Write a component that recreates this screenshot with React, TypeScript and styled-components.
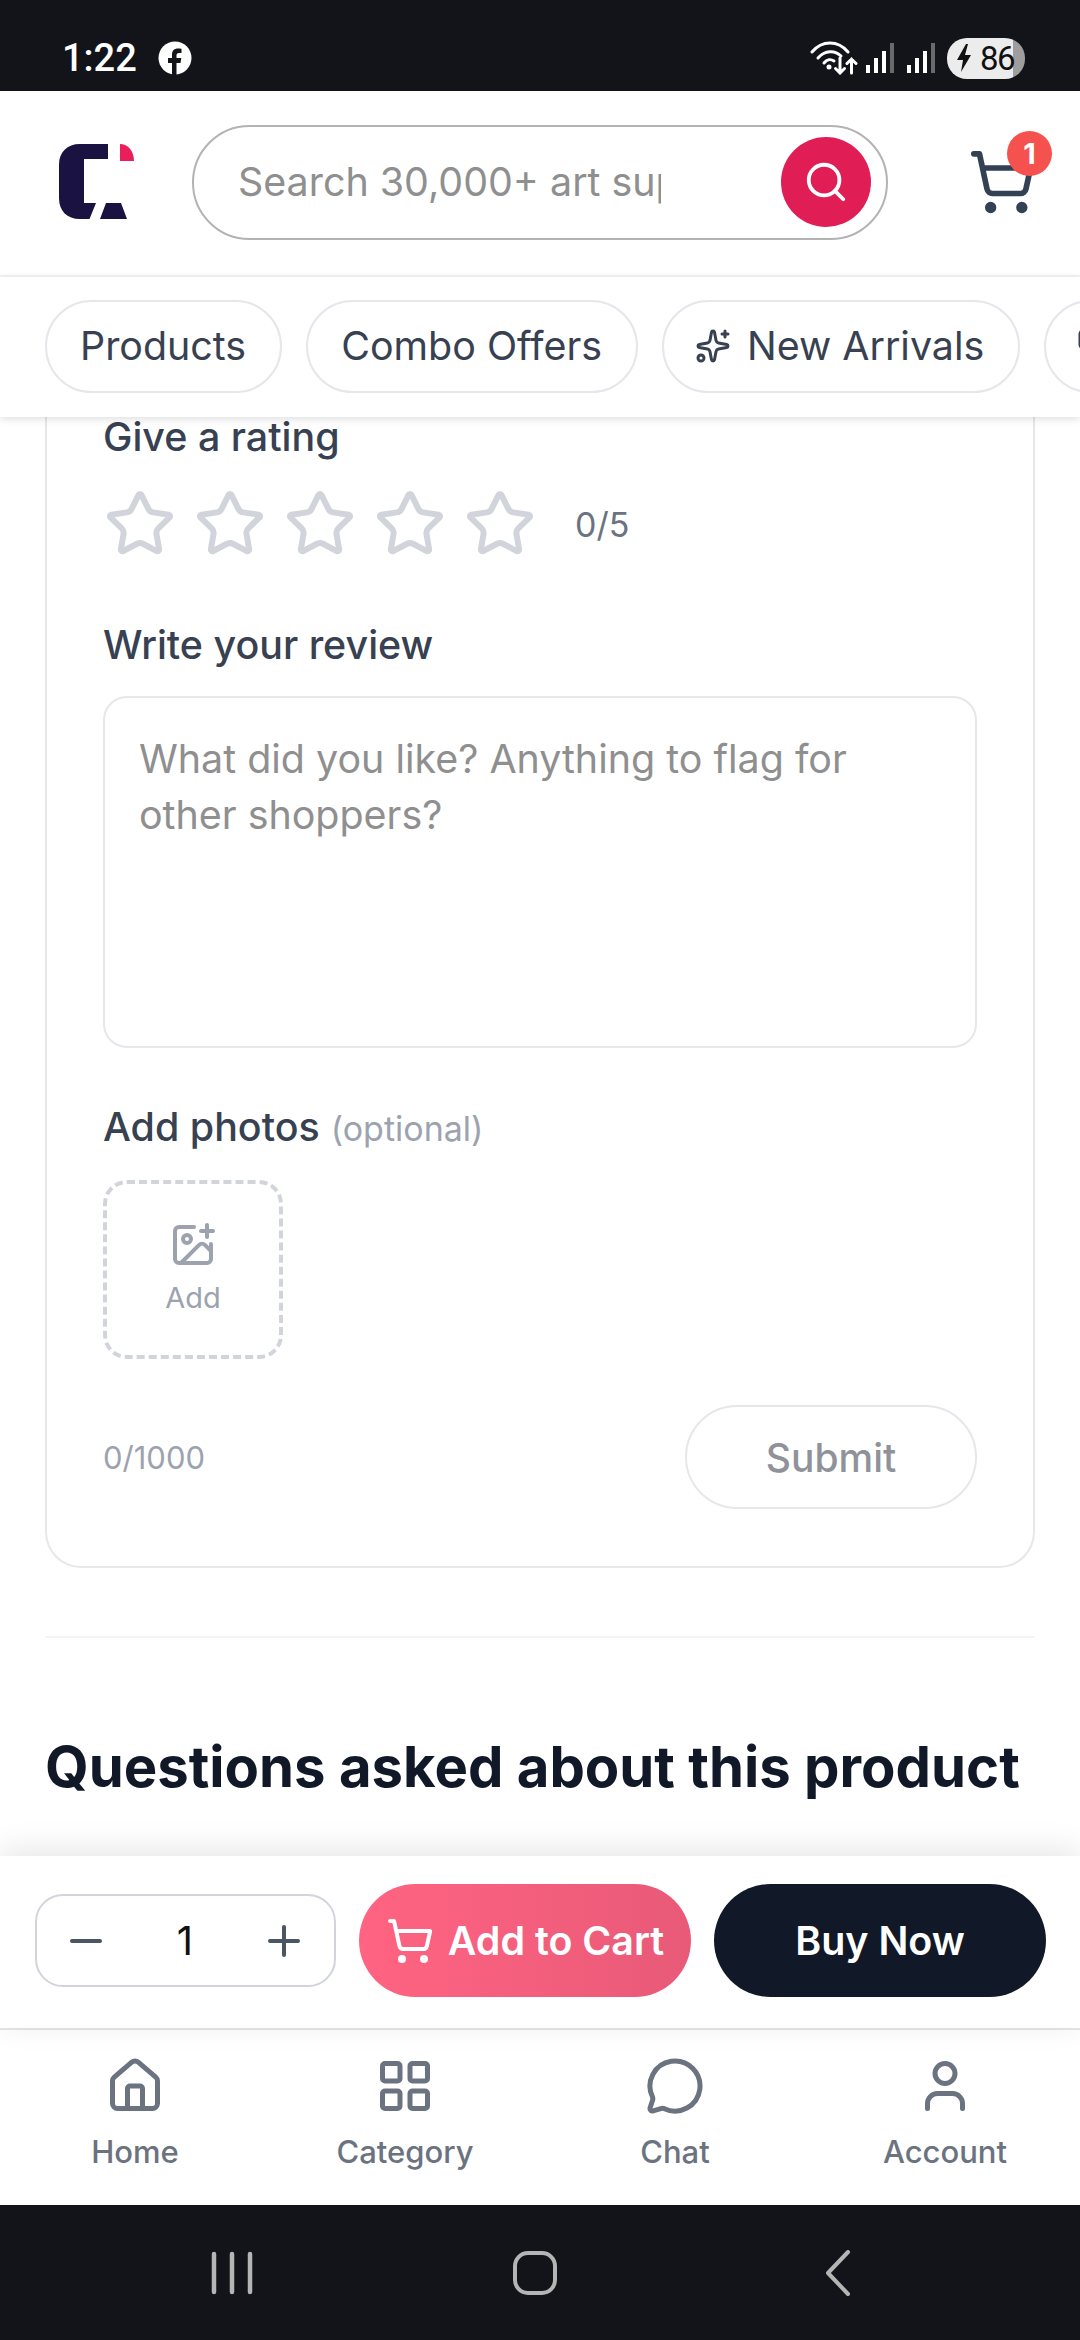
import * as React from 'react';
import styled, { createGlobalStyle } from 'styled-components';
import {
  Search,
  ShoppingCart,
  Sparkles,
  Tag,
  Star,
  ImagePlus,
  Minus,
  Plus,
  House,
  LayoutGrid,
  MessageCircle,
  User,
} from 'lucide-react';

const GlobalStyle = createGlobalStyle`
  html, body {
    margin: 0;
    padding: 0;
    background: #ffffff;
  }
  * {
    box-sizing: border-box;
  }
`;

const Page = styled.div`
  width: 1080px;
  height: 2340px;
  display: flex;
  flex-direction: column;
  overflow: hidden;
  background: #ffffff;
  font-family: Inter, 'Liberation Sans', sans-serif;
`;

const StatusBar = styled.div`
  height: 91px;
  flex: none;
  display: flex;
  align-items: center;
  padding: 25px 55px 0 62px;
  background: #121419;
  color: #ffffff;
  font-family: Roboto, 'Liberation Sans', sans-serif;
`;

const Clock = styled.span`
  font-size: 38px;
  font-weight: 500;
  margin-right: 21px;
`;

const StatusRight = styled.div`
  margin-left: auto;
  display: flex;
  align-items: center;
`;

const SignalGap = styled.span<{ $width: number }>`
  width: ${(props) => props.$width}px;
`;

const Battery = styled.div`
  width: 78px;
  height: 41px;
  margin-left: 12px;
  padding-left: 9px;
  display: flex;
  align-items: center;
  gap: 8px;
  border-radius: 20px;
  background: linear-gradient(90deg, #ececec 66px, #9e9e9e 66px);
  color: #111111;
  font-size: 33px;
  letter-spacing: -1.5px;
`;

const Header = styled.header`
  height: 186px;
  flex: none;
  display: flex;
  align-items: center;
  padding: 0 44px 2px 59px;
  border-bottom: 2px solid #f3f4f6;
`;

const SearchBox = styled.div`
  width: 696px;
  height: 115px;
  margin-left: 57px;
  padding: 0 15px 0 44px;
  display: flex;
  align-items: center;
  justify-content: space-between;
  border: 2.5px solid #b3b3b3;
  border-radius: 58px;
`;

const SearchInput = styled.input`
  width: 423px;
  padding: 0;
  border: none;
  outline: none;
  background: transparent;
  font-family: inherit;
  font-size: 39.4px;
  color: #111827;
  &::placeholder {
    color: #8f8f8f;
    opacity: 1;
  }
`;

const SearchButton = styled.button`
  width: 90px;
  height: 90px;
  padding: 0;
  display: flex;
  align-items: center;
  justify-content: center;
  border: none;
  border-radius: 50%;
  background: #e11d55;
  color: #ffffff;
`;

const CartLink = styled.div`
  position: relative;
  width: 68px;
  height: 68px;
  margin-left: auto;
  color: #334155;
`;

const CartBadge = styled.span`
  position: absolute;
  top: -17px;
  right: -16px;
  width: 45px;
  height: 45px;
  display: flex;
  align-items: center;
  justify-content: center;
  border-radius: 50%;
  background: #f5524f;
  color: #ffffff;
  font-size: 29px;
  font-weight: 700;
`;

const ChipBar = styled.nav`
  position: relative;
  z-index: 2;
  height: 140px;
  flex: none;
  padding: 23px 0 0 45px;
  display: flex;
  align-items: flex-start;
  gap: 24px;
  overflow: hidden;
  background: #ffffff;
  box-shadow: 0 2px 8px rgba(0, 0, 0, 0.13);
`;

const Chip = styled.div<{ $withIcon?: boolean }>`
  height: 93px;
  flex: none;
  padding: 0 34px 2px ${(props) => (props.$withIcon ? 31 : 33)}px;
  display: flex;
  align-items: center;
  gap: 16px;
  border: 2px solid #e5e7eb;
  border-radius: 47px;
  color: #374151;
  font-size: 39.4px;
`;

const Main = styled.main`
  flex: 1;
  min-height: 0;
  padding: 0 45px;
`;

const ReviewCard = styled.section`
  padding: 0 56px 57px;
  border: 2px solid #e5e7eb;
  border-top: none;
  border-radius: 0 0 36px 36px;
`;

const FieldLabel = styled.div<{ $top: number }>`
  margin-top: ${(props) => props.$top}px;
  font-size: 39.4px;
  line-height: 40px;
  font-weight: 500;
  color: #374151;
`;

const Optional = styled.span`
  margin-left: 11px;
  font-size: 34px;
  font-weight: 400;
  color: #9ca3af;
`;

const StarRow = styled.div`
  margin: 31px 0 0 1px;
  display: flex;
  align-items: center;
  gap: 18px;
  color: #d1d5db;
`;

const RatingValue = styled.span`
  margin-left: 21px;
  font-size: 34px;
  color: #6b7280;
`;

const ReviewInput = styled.textarea`
  display: block;
  width: 100%;
  height: 352px;
  margin-top: 31px;
  padding: 33px 34px;
  border: 2px solid #e5e7eb;
  border-radius: 24px;
  outline: none;
  resize: none;
  font-family: inherit;
  font-size: 39.4px;
  line-height: 56px;
  &::placeholder {
    color: #8f8f8f;
    opacity: 1;
  }
`;

const PhotoButton = styled.div`
  width: 180px;
  height: 179px;
  margin-top: 31px;
  padding-bottom: 2px;
  display: flex;
  flex-direction: column;
  align-items: center;
  justify-content: center;
  gap: 11px;
  border: 4.5px dashed #d1d5db;
  border-radius: 24px;
  color: #9ca3af;
  font-size: 29px;
  line-height: 36px;
`;

const CardFooter = styled.div`
  margin-top: 46px;
  display: flex;
  align-items: center;
  justify-content: space-between;
`;

const Counter = styled.span`
  font-size: 31px;
  color: #9ca3af;
`;

const SubmitButton = styled.button`
  width: 292px;
  height: 104px;
  border: 2px solid #e5e7eb;
  border-radius: 52px;
  background: #ffffff;
  font-family: inherit;
  font-size: 39px;
  font-weight: 500;
  color: #8f9299;
`;

const Divider = styled.hr`
  height: 2px;
  margin: 68px 0 0;
  border: none;
  background: #f3f4f6;
`;

const SectionTitle = styled.h2`
  margin: 99px 0 0;
  font-size: 56.25px;
  line-height: 60px;
  font-weight: 700;
  color: #111827;
  white-space: nowrap;
`;

const ActionBar = styled.div`
  position: relative;
  z-index: 2;
  height: 172px;
  flex: none;
  padding: 0 34px 3px 35px;
  display: flex;
  align-items: center;
  gap: 23px;
  background: #ffffff;
  box-shadow: 0 -6px 30px rgba(0, 0, 0, 0.1);
`;

const Stepper = styled.div`
  width: 301px;
  height: 93px;
  flex: none;
  padding: 0 26px 0 25px;
  display: flex;
  align-items: center;
  justify-content: space-between;
  border: 2px solid #d1d5db;
  border-radius: 28px;
  color: #4b5563;
  font-size: 40px;
`;

const StepValue = styled.span`
  color: #111111;
`;

const ActionButton = styled.button<{ $primary?: boolean }>`
  flex: 1;
  height: 113px;
  padding: 0;
  display: flex;
  align-items: center;
  justify-content: center;
  gap: 14px;
  border: none;
  border-radius: 57px;
  background: ${(props) => (props.$primary ? 'linear-gradient(90deg, #ff6482, #e85a78)' : '#111827')};
  color: #ffffff;
  font-family: inherit;
  font-size: 39.4px;
  font-weight: 600;
`;

const TabBar = styled.nav`
  height: 177px;
  flex: none;
  display: grid;
  grid-template-columns: repeat(4, 1fr);
  border-top: 2px solid #e5e7eb;
  background: #ffffff;
`;

const Tab = styled.div`
  padding-top: 26px;
  display: flex;
  flex-direction: column;
  align-items: center;
  gap: 16px;
  color: #6b7280;
  font-size: 31px;
  line-height: 40px;
  font-weight: 500;
`;

const SystemNav = styled.div`
  height: 135px;
  flex: none;
  padding-left: 80px;
  display: flex;
  align-items: center;
  background: #121419;
  color: #b5b5b5;
`;

const SystemKey = styled.div`
  width: 303px;
  display: flex;
  justify-content: center;
`;

const FacebookIcon = () => (
  <svg width="34" height="34" viewBox="0 0 34 34">
    <circle cx="17" cy="17" r="16.5" fill="#ffffff" />
    <path
      d="M14 34V22H10v-5h4v-3.5C14 9.500 16.400 7.500 20 7.500c1.700 0 3 .2 3.500.3V12h-2.400c-2 0-2.600 1-2.600 2.500V17h4.800l-.8 5h-4v12z"
      fill="#121419"
    />
  </svg>
);

const WifiIcon = () => (
  <svg width="48" height="34" viewBox="0 0 48 34" fill="none" stroke="#ffffff" strokeWidth="3" strokeLinecap="round">
    <path d="M2 11C12 -1 28 -1 38 11" />
    <path d="M8 17C15 9 25 9 31 15" />
    <path d="M14 22C17 18 21 18 24 20" />
    <circle cx="19" cy="26" r="2.500" fill="#ffffff" stroke="none" />
    <path d="M30 17v15M25.500 27.500l4.500 4.500 4.500-4.500" />
    <path d="M41.500 32V18M37 22.500l4.500-4.500 4.500 4.500" />
  </svg>
);

const SignalIcon = () => (
  <svg width="28" height="30" viewBox="0 0 28 30">
    <rect x="0" y="22" width="4" height="8" fill="#ffffff" />
    <rect x="8" y="15" width="4" height="15" fill="#ffffff" />
    <rect x="16" y="8" width="4" height="22" fill="#ffffff" />
    <rect x="24" y="0" width="4" height="30" fill="#6a6a6a" />
  </svg>
);

const BoltIcon = () => (
  <svg width="16" height="28" viewBox="0 0 16 28">
    <path d="M10 0L1 16h6L5 28l10-17H9l3-11z" fill="#111111" />
  </svg>
);

const Logo = () => (
  <svg width="76" height="76" viewBox="0 0 76 76">
    <path d="M49 0v15H25v44h12l-6.500 16H21C8 75 0 67 0 54V21C0 8 8 0 21 0z" fill="#1a1240" />
    <path d="M47 59h15l6 16H41z" fill="#1a1240" />
    <path d="M61 0c8 0 14 7 14 17H61z" fill="#e91e5a" />
  </svg>
);

const RecentsKey = () => (
  <svg width="42" height="44" viewBox="0 0 42 44" fill="none" stroke="currentColor" strokeWidth="4.500" strokeLinecap="round">
    <path d="M3 3v38M21 3v38M39 3v38" />
  </svg>
);

const HomeKey = () => (
  <svg width="44" height="44" viewBox="0 0 44 44" fill="none" stroke="currentColor" strokeWidth="4">
    <rect x="2" y="2" width="40" height="40" rx="13" />
  </svg>
);

const BackKey = () => (
  <svg width="26" height="46" viewBox="0 0 26 46" fill="none" stroke="currentColor" strokeWidth="4" strokeLinecap="round" strokeLinejoin="round">
    <path d="M23 2L3 23l20 21" />
  </svg>
);

const App: React.FC = () => (
  <Page>
    <GlobalStyle />
    <StatusBar>
      <Clock>1:22</Clock>
      <FacebookIcon />
      <StatusRight>
        <WifiIcon />
        <SignalGap $width={8} />
        <SignalIcon />
        <SignalGap $width={13} />
        <SignalIcon />
        <Battery>
          <BoltIcon />
          86
        </Battery>
      </StatusRight>
    </StatusBar>

    <Header>
      <Logo />
      <SearchBox>
        <SearchInput placeholder="Search 30,000+ art supplies" readOnly />
        <SearchButton aria-label="Search">
          <Search size={46} strokeWidth={2} />
        </SearchButton>
      </SearchBox>
      <CartLink>
        <ShoppingCart size={68} strokeWidth={2} />
        <CartBadge>1</CartBadge>
      </CartLink>
    </Header>

    <ChipBar>
      <Chip>Products</Chip>
      <Chip>Combo Offers</Chip>
      <Chip $withIcon>
        <Sparkles size={36} strokeWidth={2} />
        New Arrivals
      </Chip>
      <Chip $withIcon>
        <Tag size={36} strokeWidth={2} />
      </Chip>
    </ChipBar>

    <Main>
      <ReviewCard>
        <FieldLabel $top={0}>Give a rating</FieldLabel>
        <StarRow>
          {[1, 2, 3, 4, 5].map((n) => (
            <Star key={n} size={72} strokeWidth={2} />
          ))}
          <RatingValue>0/5</RatingValue>
        </StarRow>
        <FieldLabel $top={65}>Write your review</FieldLabel>
        <ReviewInput placeholder="What did you like? Anything to flag for other shoppers?" readOnly />
        <FieldLabel $top={59}>
          Add photos<Optional>(optional)</Optional>
        </FieldLabel>
        <PhotoButton>
          <ImagePlus size={48} strokeWidth={2} />
          Add
        </PhotoButton>
        <CardFooter>
          <Counter>0/1000</Counter>
          <SubmitButton>Submit</SubmitButton>
        </CardFooter>
      </ReviewCard>
      <Divider />
      <SectionTitle>Questions asked about this product</SectionTitle>
    </Main>

    <ActionBar>
      <Stepper>
        <Minus size={48} strokeWidth={2} />
        <StepValue>1</StepValue>
        <Plus size={48} strokeWidth={2} />
      </Stepper>
      <ActionButton $primary>
        <ShoppingCart size={48} strokeWidth={2} />
        Add to Cart
      </ActionButton>
      <ActionButton>Buy Now</ActionButton>
    </ActionBar>

    <TabBar>
      <Tab>
        <House size={60} strokeWidth={2} />
        Home
      </Tab>
      <Tab>
        <LayoutGrid size={60} strokeWidth={2} />
        Category
      </Tab>
      <Tab>
        <MessageCircle size={60} strokeWidth={2} />
        Chat
      </Tab>
      <Tab>
        <User size={60} strokeWidth={2} />
        Account
      </Tab>
    </TabBar>

    <SystemNav>
      <SystemKey>
        <RecentsKey />
      </SystemKey>
      <SystemKey>
        <HomeKey />
      </SystemKey>
      <SystemKey>
        <BackKey />
      </SystemKey>
    </SystemNav>
  </Page>
);

export default App;
